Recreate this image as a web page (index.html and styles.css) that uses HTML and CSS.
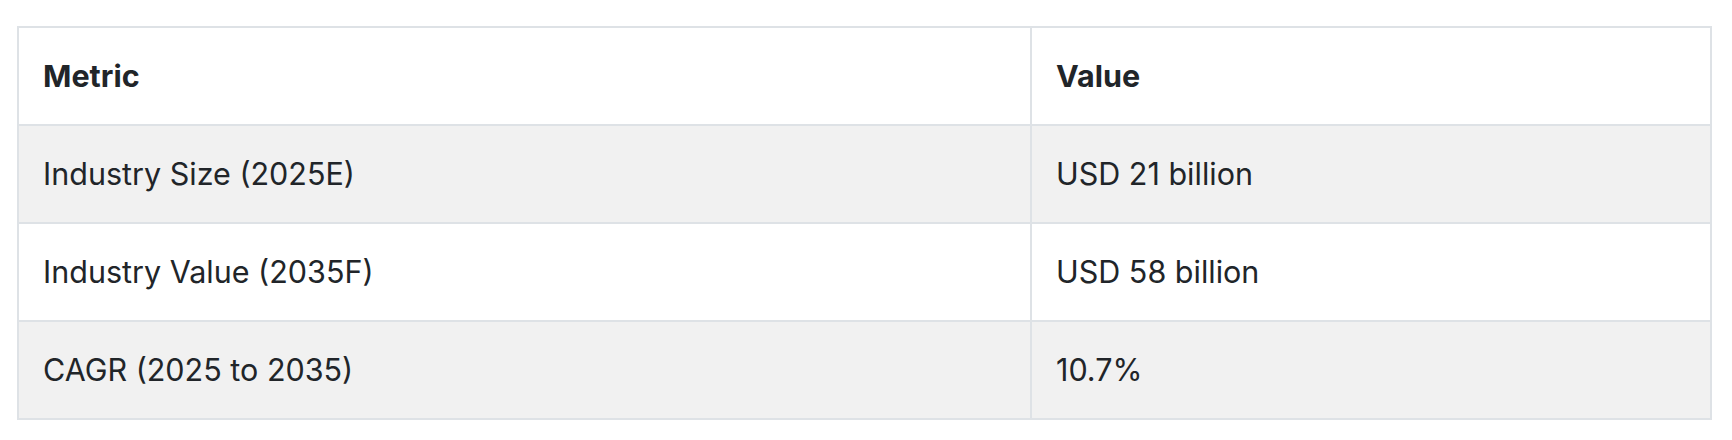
FILE: index.html
```html
<!DOCTYPE html>
<html lang="en">
<head>
<meta charset="utf-8">
<title>Industry Metrics</title>
<link rel="stylesheet" href="styles.css">
</head>
<body>
<table class="metrics">
  <colgroup>
    <col class="col-metric">
    <col class="col-value">
  </colgroup>
  <thead>
    <tr><th>Metric</th><th>Value</th></tr>
  </thead>
  <tbody>
    <tr class="striped"><td>Industry Size (2025E)</td><td>USD 21 billion</td></tr>
    <tr><td>Industry Value (2035F)</td><td>USD 58 billion</td></tr>
    <tr class="striped"><td>CAGR (2025 to 2035)</td><td>10.7%</td></tr>
  </tbody>
</table>
</body>
</html>
```
FILE: styles.css
```css
html, body {
  margin: 0;
  padding: 0;
  background: #ffffff;
}
body {
  padding: 26px 20px 0 17px;
  font-family: Inter, "Noto Sans", "Liberation Sans", sans-serif;
  color: #212529;
}
.metrics {
  width: 1695px;
  table-layout: fixed;
  border-collapse: collapse;
  border: 2px solid #dee2e6;
  font-size: 30.5px;
}
.metrics th,
.metrics td {
  border: 2px solid #dee2e6;
  padding: 27px 24px;
  line-height: 42px;
  text-align: left;
  vertical-align: middle;
}
.metrics th {
  font-weight: 700;
}
.metrics td {
  font-weight: 400;
}
.col-metric {
  width: 1013px;
}
.striped td {
  background: #f1f1f1;
}
```
